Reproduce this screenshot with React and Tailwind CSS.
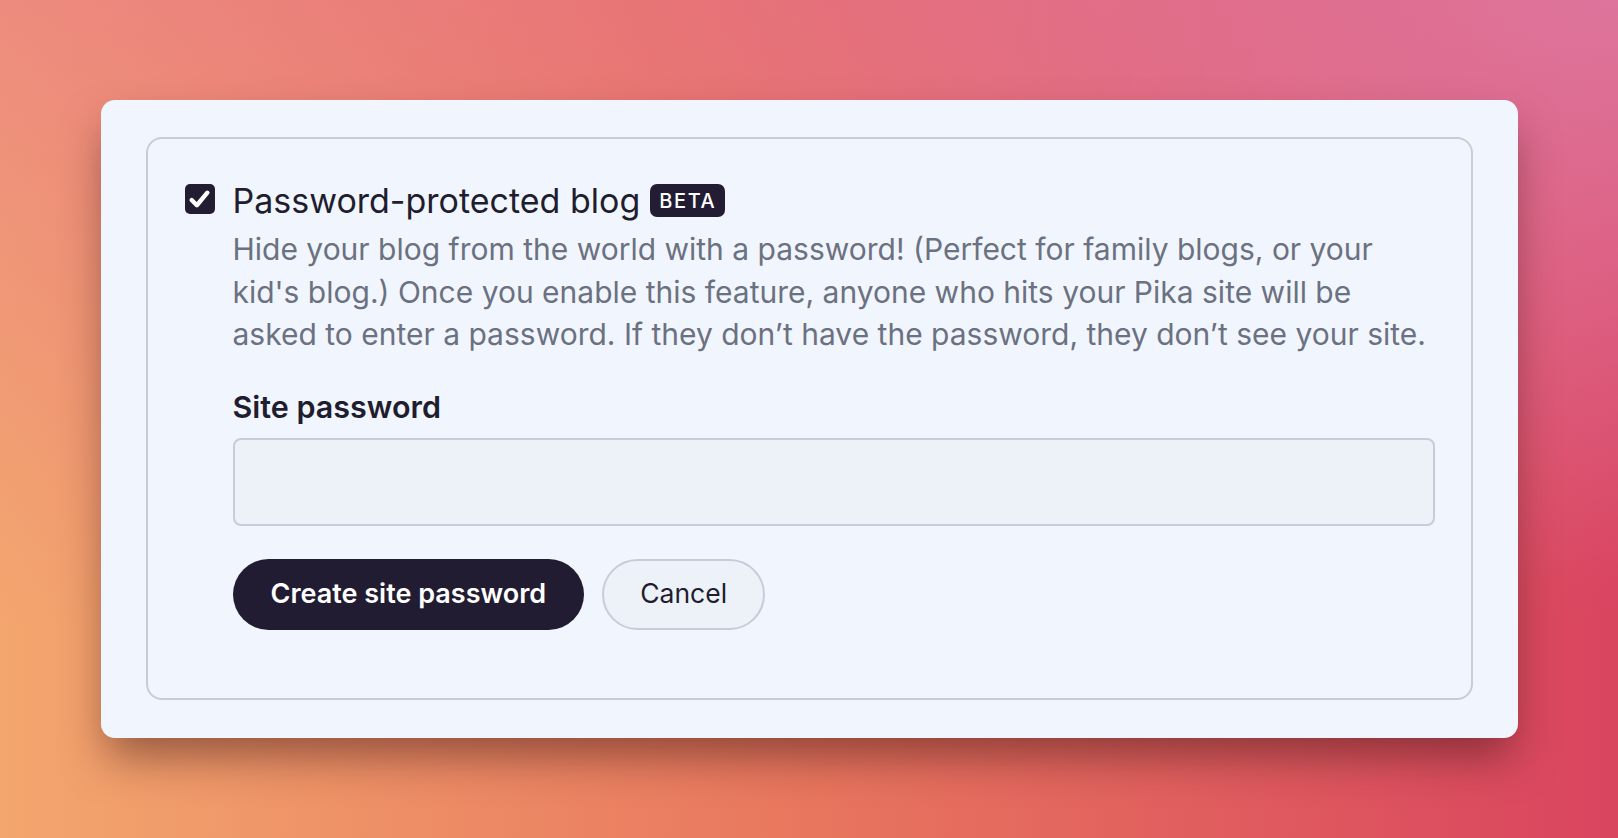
import React, { useState } from 'react'

const font = { fontFamily: 'Inter, "Noto Sans", sans-serif' }

function CheckBox({ checked, onChange }) {
  return (
    <button
      type="button"
      onClick={onChange}
      className={`mt-[6px] h-[30px] w-[30px] shrink-0 rounded-[5px] flex items-center justify-center ${checked ? 'bg-[#221d33]' : 'bg-white border-2 border-[#c8ccd6]'}`}
    >
      {checked && (
        <svg width="23" height="23" viewBox="0 0 22 22" fill="none">
          <path d="M3.5 11.5 L8.5 16.5 L18.5 4.5" stroke="white" strokeWidth="4.2" strokeLinecap="round" strokeLinejoin="round" />
        </svg>
      )}
    </button>
  )
}

export default function App() {
  const [enabled, setEnabled] = useState(true)
  const [password, setPassword] = useState('')

  return (
    <div
      style={font}
      className="w-full h-[838px] flex items-center justify-center bg-[radial-gradient(ellipse_60%_70%_at_100%_0%,rgba(222,128,168,0.75),transparent),linear-gradient(to_bottom,rgba(228,100,150,0.4),rgba(228,100,150,0)_75%),linear-gradient(to_right,#f3a66e,#e8765e_50%,#d9445f)]"
    >
      <div className="w-[1417px] rounded-[14px] bg-[#f1f6fe] px-[45px] pt-[37px] pb-[38px] shadow-[0_24px_44px_-6px_rgba(60,20,20,0.5)]">
        <div className="rounded-[16px] border-2 border-[#c8ccd6] pl-[37px] pr-[36px] pt-[39px] pb-[68px]">
          <div className="flex gap-[18px]">
            <CheckBox checked={enabled} onChange={() => setEnabled(!enabled)} />
            <div className="flex-1">
              <div className="flex items-center h-[45px]">
                <span className="text-[34px] leading-[45px] text-[#1f1d2e]">Password-protected blog</span>
                <span className="ml-[10px] h-[33px] px-[9px] rounded-[7px] bg-[#221d33] text-white text-[20px] tracking-[0.08em] font-medium flex items-center leading-none">BETA</span>
              </div>
              <p className="mt-[5px] text-[30px] leading-[42.5px] text-[#6b7180]">
                Hide your blog from the world with a password! (Perfect for family blogs, or your kid's blog.) Once you enable this feature, anyone who hits your Pika site will be asked to enter a password. If they don’t have the password, they don’t see your site.
              </p>
              <label className="block mt-[30px] text-[30.5px] leading-[42px] font-semibold text-[#1f1d2e]">Site password</label>
              <input
                type="password"
                value={password}
                onChange={(e) => setPassword(e.target.value)}
                className="mt-[10px] block w-full h-[88px] rounded-[8px] border-2 border-[#c8ccd6] bg-[#edf2f9] px-5 text-[28px] outline-none"
              />
              <div className="mt-[33px] flex gap-[18px]">
                <button className="h-[71px] px-[38px] rounded-full bg-[#211c31] text-white text-[27px] font-semibold">Create site password</button>
                <button className="h-[71px] px-[36px] rounded-full bg-[#edf2f9] border-2 border-[#c8ccd6] text-[#1f1d2e] text-[26.5px]">Cancel</button>
              </div>
            </div>
          </div>
        </div>
      </div>
    </div>
  )
}
